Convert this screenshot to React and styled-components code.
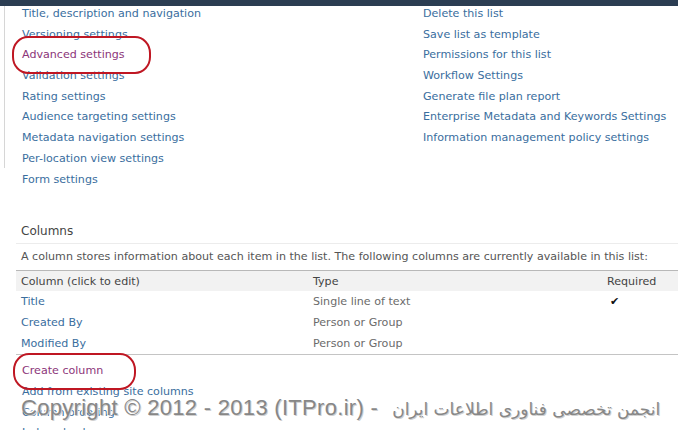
import React from "react";
import styled, { createGlobalStyle } from "styled-components";

const Global = createGlobalStyle`
  html, body { margin: 0; padding: 0; background: #fff; }
  body { width: 678px; height: 430px; overflow: hidden; font-family: "DejaVu Sans", Verdana, sans-serif; }
`;

const Page = styled.div`
  position: relative;
  width: 678px;
  height: 430px;
  overflow: hidden;
  background: #fff;
`;

const TopBar = styled.div`
  height: 6px;
  background: #2b3d52;
`;

const Settings = styled.div`
  display: flex;
  margin-top: -2px;
`;

const Rail = styled.div`
  width: 1px;
  height: 162px;
  margin: 2px 17px 0 4px;
  background: #d6d6d6;
`;

const LinkList = styled.ul`
  list-style: none;
  margin: 0;
  padding: 0;
  width: ${(p) => p.$width}px;
`;

const Item = styled.li`
  height: 20.7px;
  line-height: 20.7px;
  font-size: 11.1px;
  white-space: nowrap;
`;

const Link = styled.a`
  color: ${(p) => (p.$visited ? "#8c3579" : "#3a6e9e")};
  text-decoration: none;
`;

const Circled = styled.span`
  position: relative;
  &::before {
    content: "";
    position: absolute;
    left: ${(p) => p.$l}px;
    right: ${(p) => p.$r}px;
    top: ${(p) => p.$t}px;
    bottom: ${(p) => p.$b}px;
    border: 2.5px solid #bf1723;
    border-radius: 16px / 17px;
    pointer-events: none;
  }
`;

const Section = styled.section`
  margin: 30px 0 0 16px;
`;

const Heading = styled.h2`
  margin: 0;
  padding-left: 5px;
  font-weight: normal;
  font-size: 12px;
  color: #444;
  height: 23px;
  line-height: 22px;
  border-bottom: 1px solid #ececec;
`;

const Description = styled.p`
  margin: 0;
  padding-left: 5px;
  font-size: 11.1px;
  color: #555;
  height: 26px;
  line-height: 26px;
  white-space: nowrap;
`;

const Table = styled.table`
  width: 662px;
  table-layout: fixed;
  border-collapse: collapse;
  font-size: 11.1px;
  border-top: 1px solid #b8b8b8;
  border-bottom: 1px solid #c4c4c4;
`;

const Col = styled.col`
  width: ${(p) => p.$w}px;
`;

const HeadRow = styled.tr`
  background: #f2f2f2;
`;

const Th = styled.th`
  text-align: left;
  font-weight: normal;
  color: #444;
  height: 20px;
  padding: 0 0 0 5px;
  white-space: nowrap;
`;

const Td = styled.td`
  height: 21px;
  padding: 0 0 0 5px;
  white-space: nowrap;
  color: ${(p) => (p.$muted ? "#6b6b6b" : "#3a6e9e")};
`;

const Check = styled.span`
  display: inline-block;
  margin-left: 3px;
  font-size: 11px;
  color: #111;
`;

const Actions = styled.ul`
  list-style: none;
  margin: 6px 0 0 22px;
  padding: 0;
`;

const Watermark = styled.div`
  position: absolute;
  left: 21px;
  top: 395px;
  font-family: "Liberation Sans", Arial, "DejaVu Sans", sans-serif;
  font-size: 22px;
  color: #878787;
  text-shadow: 1px 1px 0 #d0d0d0, -1px -1px 0 #ffffff;
  white-space: nowrap;
  letter-spacing: 0.3px;
`;

const Persian = styled.span`
  font-family: "DejaVu Sans", sans-serif;
  font-size: 17px;
  letter-spacing: 0;
  margin-left: 14px;
`;

const leftLinks = [
  "Title, description and navigation",
  "Versioning settings",
  "Advanced settings",
  "Validation settings",
  "Rating settings",
  "Audience targeting settings",
  "Metadata navigation settings",
  "Per-location view settings",
  "Form settings",
];

const rightLinks = [
  "Delete this list",
  "Save list as template",
  "Permissions for this list",
  "Workflow Settings",
  "Generate file plan report",
  "Enterprise Metadata and Keywords Settings",
  "Information management policy settings",
];

const rows = [
  { name: "Title", type: "Single line of text", required: true },
  { name: "Created By", type: "Person or Group" },
  { name: "Modified By", type: "Person or Group" },
];

export default function App() {
  return (
    <Page>
      <Global />
      <TopBar />
      <Settings>
        <Rail />
        <LinkList $width={401}>
          {leftLinks.map((t) =>
            t === "Advanced settings" ? (
              <Item key={t}>
                <Circled $l={-10} $r={-26} $t={-12} $b={-13}>
                  <Link href="#" $visited>{t}</Link>
                </Circled>
              </Item>
            ) : (
              <Item key={t}>
                <Link href="#">{t}</Link>
              </Item>
            )
          )}
        </LinkList>
        <LinkList $width={255}>
          {rightLinks.map((t) => (
            <Item key={t}>
              <Link href="#">{t}</Link>
            </Item>
          ))}
        </LinkList>
      </Settings>
      <Section>
        <Heading>Columns</Heading>
        <Description>
          A column stores information about each item in the list. The following columns are currently available in this list:
        </Description>
        <Table>
          <colgroup>
            <Col $w={292} />
            <Col $w={294} />
            <Col $w={76} />
          </colgroup>
          <thead>
            <HeadRow>
              <Th>Column (click to edit)</Th>
              <Th>Type</Th>
              <Th>Required</Th>
            </HeadRow>
          </thead>
          <tbody>
            {rows.map((r) => (
              <tr key={r.name}>
                <Td>{r.name}</Td>
                <Td $muted>{r.type}</Td>
                <Td>{r.required ? <Check>✔</Check> : null}</Td>
              </tr>
            ))}
          </tbody>
        </Table>
      </Section>
      <Actions>
        <Item>
          <Circled $l={-9} $r={-33} $t={-11} $b={-13}>
            <Link href="#" $visited>Create column</Link>
          </Circled>
        </Item>
        <Item><Link href="#">Add from existing site columns</Link></Item>
        <Item><Link href="#">Column ordering</Link></Item>
        <Item><Link href="#">Indexed columns</Link></Item>
      </Actions>
      <Watermark>
        Copyright © 2012 - 2013 (ITPro.ir) -<Persian>انجمن تخصصی فناوری اطلاعات ایران</Persian>
      </Watermark>
    </Page>
  );
}
